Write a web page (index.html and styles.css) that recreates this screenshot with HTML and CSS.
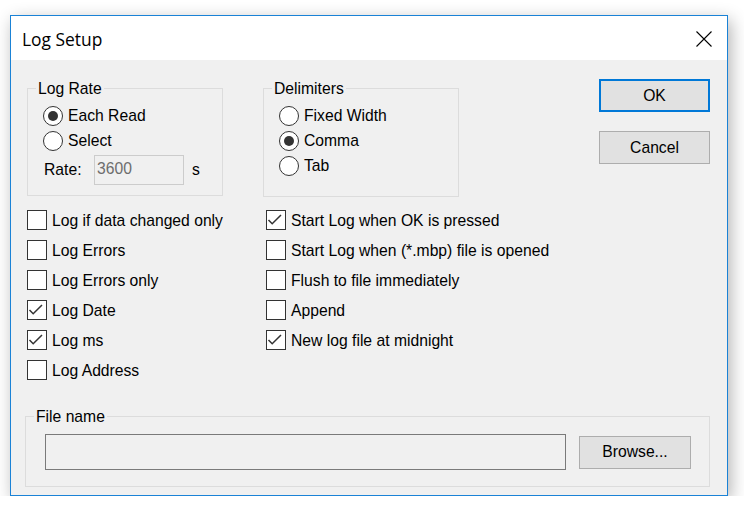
FILE: index.html
```html
<!DOCTYPE html>
<html>
<head>
<meta charset="utf-8">
<link rel="stylesheet" href="styles.css">
</head>
<body>
<div class="window">
  <div class="titlebar">
    <span class="title">Log Setup</span>
    <svg class="close" width="16" height="16" viewBox="0 0 16 16"><path d="M0.5 0.5 L15.5 15.5 M15.5 0.5 L0.5 15.5" stroke="#000" stroke-width="1.1" fill="none"/></svg>
  </div>
  <div class="client">
    <div class="top">
      <div class="group rate">
        <span class="cap">Log Rate</span>
        <div class="radio on"><span class="dot"></span>Each Read</div>
        <div class="radio"><span class="dot"></span>Select</div>
        <div class="raterow">
          <span class="ratelbl">Rate:</span>
          <span class="ratebox">3600</span>
          <span class="unit">s</span>
        </div>
      </div>
      <div class="group delim">
        <span class="cap">Delimiters</span>
        <div class="radio"><span class="dot"></span>Fixed Width</div>
        <div class="radio on"><span class="dot"></span>Comma</div>
        <div class="radio"><span class="dot"></span>Tab</div>
      </div>
      <div class="buttons">
        <div class="btn default">OK</div>
        <div class="btn">Cancel</div>
      </div>
    </div>
    <div class="checks">
      <div class="col">
        <div class="check"><span class="box"></span>Log if data changed only</div>
        <div class="check"><span class="box"></span>Log Errors</div>
        <div class="check"><span class="box"></span>Log Errors only</div>
        <div class="check"><span class="box"><svg viewBox="0 0 18 18" width="18" height="18"><polyline points="1.5,9 5.2,12.8 14,4" fill="none" stroke="#333" stroke-width="1.5"/></svg></span>Log Date</div>
        <div class="check"><span class="box"><svg viewBox="0 0 18 18" width="18" height="18"><polyline points="1.5,9 5.2,12.8 14,4" fill="none" stroke="#333" stroke-width="1.5"/></svg></span>Log ms</div>
        <div class="check"><span class="box"></span>Log Address</div>
      </div>
      <div class="col">
        <div class="check"><span class="box"><svg viewBox="0 0 18 18" width="18" height="18"><polyline points="1.5,9 5.2,12.8 14,4" fill="none" stroke="#333" stroke-width="1.5"/></svg></span>Start Log when OK is pressed</div>
        <div class="check"><span class="box"></span>Start Log when (*.mbp) file is opened</div>
        <div class="check"><span class="box"></span>Flush to file immediately</div>
        <div class="check"><span class="box"></span>Append</div>
        <div class="check"><span class="box"><svg viewBox="0 0 18 18" width="18" height="18"><polyline points="1.5,9 5.2,12.8 14,4" fill="none" stroke="#333" stroke-width="1.5"/></svg></span>New log file at midnight</div>
      </div>
    </div>
    <div class="group file">
      <span class="cap">File name</span>
      <div class="filebox"></div>
      <div class="btn browse">Browse...</div>
    </div>
  </div>
</div>
</body>
</html>
```
FILE: styles.css
```css
html, body {
  margin: 0;
  padding: 0;
  background: #ffffff;
}
body {
  font-family: "Liberation Sans", Arial, sans-serif;
  font-size: 15.7px;
  color: #000;
}
.window {
  margin: 15px 0 0 10px;
  width: 718px;
  height: 481px;
  box-sizing: border-box;
  border: 1px solid #1a82d6;
  background: #f0f0f0;
  display: flex;
  flex-direction: column;
  box-shadow: 3px 5px 16px rgba(0, 0, 0, 0.3);
}
.titlebar {
  height: 44px;
  background: #ffffff;
  display: flex;
  align-items: center;
  justify-content: space-between;
  padding: 0 15px 0 11px;
  flex: none;
}
.title {
  font-family: "Segoe UI", "Open Sans", sans-serif;
  font-size: 17.4px;
  line-height: 20px;
  margin-top: 1px;
}
.close {
  display: block;
  margin-top: 1px;
}
.client {
  flex: 1;
  padding: 19px 17px 0 16px;
  display: flex;
  flex-direction: column;
}
.top {
  display: flex;
  align-items: flex-start;
}
.group {
  position: relative;
  border: 1px solid #dcdcdc;
  box-sizing: border-box;
}
.cap {
  position: absolute;
  top: -9px;
  left: 8px;
  padding: 0 2px;
  background: #f0f0f0;
  line-height: 18px;
}
.rate {
  margin-top: 9px;
  width: 196px;
  height: 108px;
  padding: 14px 0 0 15px;
}
.delim {
  margin-top: 9px;
  margin-left: 40px;
  width: 196px;
  height: 109px;
  padding: 14px 0 0 15px;
}
.radio {
  height: 25px;
  display: flex;
  align-items: center;
  gap: 5px;
}
.radio span + * {
  margin-top: 1px;
}
.dot {
  width: 20px;
  height: 20px;
  box-sizing: border-box;
  border: 1px solid #333;
  border-radius: 50%;
  background: #fff;
  display: flex;
  align-items: center;
  justify-content: center;
  flex: none;
}
.radio.on .dot::after {
  content: "";
  width: 10px;
  height: 10px;
  border-radius: 50%;
  background: #333;
}
.raterow {
  margin-top: 2px;
  display: flex;
  align-items: center;
  height: 30px;
}
.ratelbl {
  margin-left: 1px;
  width: 50px;
}
.ratebox {
  width: 90px;
  height: 30px;
  box-sizing: border-box;
  border: 1px solid #cccccc;
  background: #f0f0f0;
  color: #6d6d6d;
  padding: 4px 0 0 2px;
  line-height: 18px;
}
.unit {
  margin-left: 8px;
}
.buttons {
  margin-left: 140px;
  display: flex;
  flex-direction: column;
  gap: 19px;
}
.btn {
  width: 111px;
  height: 33px;
  box-sizing: border-box;
  border: 1px solid #adadad;
  background: #e1e1e1;
  display: flex;
  align-items: center;
  justify-content: center;
}
.btn.default {
  border: 2px solid #0078d7;
}
.checks {
  margin-top: 8px;
  display: flex;
}
.col {
  width: 239px;
  display: flex;
  flex-direction: column;
}
.check {
  height: 30px;
  display: flex;
  align-items: center;
  gap: 5px;
  white-space: nowrap;
  padding-top: 1px;
  box-sizing: border-box;
}
.box {
  width: 20px;
  height: 20px;
  box-sizing: border-box;
  border: 1px solid #333;
  background: #fff;
  flex: none;
  display: flex;
  align-items: center;
  justify-content: center;
  margin-top: -1px;
}
.box svg {
  display: block;
}
.file {
  margin-top: 31px;
  margin-left: -2px;
  width: 685px;
  height: 71px;
  display: flex;
  align-items: center;
  padding-left: 19px;
  padding-top: 1px;
}
.filebox {
  width: 521px;
  height: 36px;
  box-sizing: border-box;
  border: 1px solid #7a7a7a;
  background: #f0f0f0;
}
.browse {
  margin-left: 13px;
  width: 112px;
}
```
